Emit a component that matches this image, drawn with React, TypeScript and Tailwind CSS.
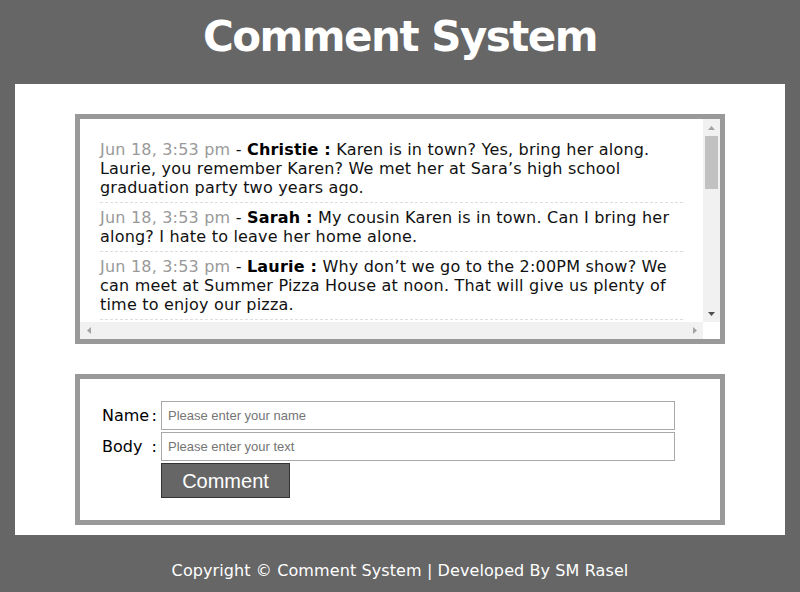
import React from "react";

const comments = [
  {
    date: "Jun 18, 3:53 pm",
    name: "Christie",
    text: "Karen is in town? Yes, bring her along. Laurie, you remember Karen? We met her at Sara\u2019s high school graduation party two years ago.",
  },
  {
    date: "Jun 18, 3:53 pm",
    name: "Sarah",
    text: "My cousin Karen is in town. Can I bring her along? I hate to leave her home alone.",
  },
  {
    date: "Jun 18, 3:53 pm",
    name: "Laurie",
    text: "Why don\u2019t we go to the 2:00PM show? We can meet at Summer Pizza House at noon. That will give us plenty of time to enjoy our pizza.",
  },
];

const verdana = { fontFamily: '"DejaVu Sans", Verdana, sans-serif' };
const arial = { fontFamily: '"Liberation Sans", Arial, sans-serif' };

function Tri({ dir, color }: { dir: "up" | "down" | "left" | "right"; color: string }) {
  const pts =
    dir === "up"
      ? "0,4 7,4 3.5,0"
      : dir === "down"
      ? "0,0 7,0 3.5,4"
      : dir === "left"
      ? "4,0 4,7 0,3.5"
      : "0,0 0,7 4,3.5";
  const w = dir === "up" || dir === "down" ? 7 : 4;
  const h = dir === "up" || dir === "down" ? 4 : 7;
  return (
    <svg width={w} height={h} viewBox={`0 0 ${w} ${h}`}>
      <polygon points={pts} fill={color} />
    </svg>
  );
}

export default function App() {
  return (
    <div className="w-[800px] h-[592px] bg-[#666666] flex flex-col" style={verdana}>
      <header className="h-[84px] flex items-center justify-center shrink-0">
        <h1 className="text-[42px] font-bold text-white leading-none tracking-[-1.5px] pb-[10px]">
          Comment System
        </h1>
      </header>

      <main className="mx-[15px] bg-white pt-[30px] pb-[10px] flex flex-col gap-[30px] shrink-0">
        {/* Comments box */}
        <div className="mx-auto w-[650px] h-[230px] border-[5px] border-[#999999] flex flex-col">
          <div className="flex flex-1 min-h-0">
            <div className="flex-1 overflow-hidden">
              <ul className="mt-4 px-5 text-[16px] leading-[19px] tracking-[0.2px] text-[#111]">
                {comments.map((c, i) => (
                  <li key={i} className="py-[5px] border-b border-dashed border-[#dddddd]">
                    <span className="text-[#999999]">{c.date}</span> -{" "}
                    <b className="font-bold text-black">{c.name} :</b> {c.text}
                  </li>
                ))}
              </ul>
            </div>
            <div className="w-[17px] bg-[#f1f1f1] flex flex-col shrink-0">
              <div className="h-[17px] flex items-center justify-center">
                <Tri dir="up" color="#a3a3a3" />
              </div>
              <div className="flex-1">
                <div className="h-[53px] mx-[2px] bg-[#c1c1c1]" />
              </div>
              <div className="h-[17px] flex items-center justify-center">
                <Tri dir="down" color="#505050" />
              </div>
            </div>
          </div>
          <div className="h-[17px] flex shrink-0">
            <div className="flex-1 bg-[#f1f1f1] flex justify-between">
              <div className="w-[17px] flex items-center justify-center">
                <Tri dir="left" color="#a3a3a3" />
              </div>
              <div className="w-[17px] flex items-center justify-center">
                <Tri dir="right" color="#a3a3a3" />
              </div>
            </div>
            <div className="w-[17px] bg-white" />
          </div>
        </div>

        {/* Form box */}
        <div className="mx-auto w-[650px] h-[151px] border-[5px] border-[#999999] pt-[22px] pl-[22px]">
          <div className="flex flex-col gap-[2px]">
            <div className="flex items-center h-[29px]">
              <label className="w-[59px] pr-[4px] flex justify-between text-[16px] leading-[19px] text-black">
                <span>Name</span>
                <span>:</span>
              </label>
              <input
                className="w-[514px] h-[29px] border border-[#a9a9a9] px-[6px] text-[13px] text-black placeholder:text-[#757575] outline-none"
                style={arial}
                placeholder="Please enter your name"
              />
            </div>
            <div className="flex items-center h-[29px]">
              <label className="w-[59px] pr-[4px] flex justify-between text-[16px] leading-[19px] text-black">
                <span>Body</span>
                <span>:</span>
              </label>
              <input
                className="w-[514px] h-[29px] border border-[#a9a9a9] px-[6px] text-[13px] text-black placeholder:text-[#757575] outline-none"
                style={arial}
                placeholder="Please enter your text"
              />
            </div>
            <div className="flex">
              <div className="w-[59px]" />
              <button
                className="w-[129px] h-[35px] bg-[#666666] border border-[#333333] text-white text-[20px] leading-none"
                style={arial}
              >
                Comment
              </button>
            </div>
          </div>
        </div>
      </main>

      <footer className="flex-1 flex justify-center pt-[26px]">
        <p className="text-white text-[16px] leading-[19px] tracking-[0.1px]">
          Copyright © Comment System | Developed By SM Rasel
        </p>
      </footer>
    </div>
  );
}
